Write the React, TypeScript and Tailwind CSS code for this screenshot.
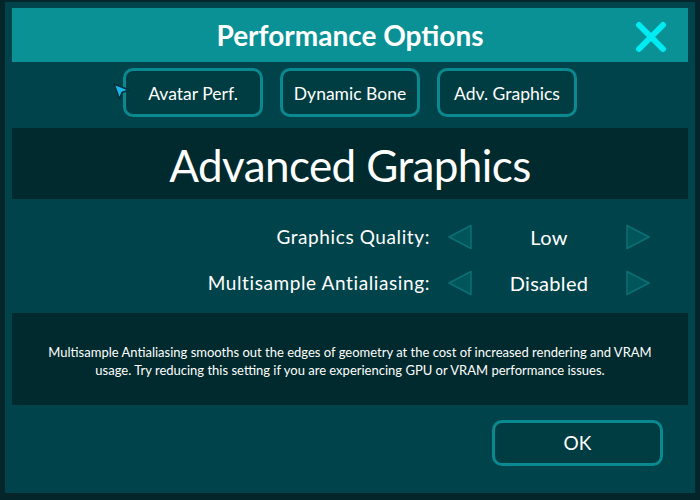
import React from 'react';

const tabs = ['Avatar Perf.', 'Dynamic Bone', 'Adv. Graphics'];

const settings = [
  { label: 'Graphics Quality:', value: 'Low' },
  { label: 'Multisample Antialiasing:', value: 'Disabled' },
];

const Arrow = ({ dir }: { dir: 'left' | 'right' }) => (
  <svg width="26" height="26" viewBox="0 0 26 26">
    <polygon
      points={dir === 'left' ? '24,1.5 24,24.5 2,13' : '2,1.5 2,24.5 24,13'}
      fill="#00555a"
      stroke="#0a7075"
      strokeWidth="1.5"
      strokeLinejoin="round"
    />
  </svg>
);

export default function App() {
  return (
    <div
      className="relative w-[700px] h-[500px] overflow-hidden bg-[#04262a] pt-[2px] pl-[5px]"
      style={{ fontFamily: 'Lato, "Noto Sans", sans-serif' }}
    >
      <div className="w-[690px] h-[491px] bg-[#00434a] px-[7px] pt-[6px] flex flex-col">
        {/* header */}
        <div className="relative h-[54px] bg-[#0a9196] flex items-center justify-center">
          <h1 className="text-[28px] font-bold text-white leading-none">Performance Options</h1>
          <button className="absolute right-[20px] top-[13px] w-[34px] h-[32px]">
            <svg width="34" height="32" viewBox="0 0 34 32">
              <path d="M5 4 L29 28 M29 4 L5 28" stroke="#00ebf2" strokeWidth="6" strokeLinecap="round" />
            </svg>
          </button>
        </div>

        {/* tabs */}
        <div className="mt-[6px] flex justify-center gap-[17px]">
          {tabs.map((t) => (
            <button
              key={t}
              className="w-[140px] h-[49px] pt-[4px] rounded-[10px] border-[3px] border-[#0a8a90] bg-[#003d42] text-white text-[17.5px]"
            >
              {t}
            </button>
          ))}
        </div>

        {/* section title */}
        <div className="mt-[11px] h-[71px] bg-[#002a2d] flex items-center justify-center">
          <h2 className="text-[44px] text-white leading-none tracking-[-0.6px] pt-[2px]">Advanced Graphics</h2>
        </div>

        {/* settings rows */}
        <div className="pt-[23px] flex flex-col gap-[18px]">
          {settings.map((s) => (
            <div key={s.label} className="h-[28px] grid grid-cols-[418px_17px_26px_152px_26px] items-center">
              <span className="text-right text-white text-[19px] tracking-[0.6px]">{s.label}</span>
              <span />
              <Arrow dir="left" />
              <span className="text-center text-white text-[20px] tracking-[0.3px]">{s.value}</span>
              <Arrow dir="right" />
            </div>
          ))}
        </div>

        {/* description */}
        <div className="mt-[17px] h-[92px] bg-[#002a2d] flex items-center justify-center px-4 pt-[4px]">
          <p className="text-center text-white text-[13px] leading-[18px]">
            Multisample Antialiasing smooths out the edges of geometry at the cost of increased rendering and VRAM
            <br />
            usage. Try reducing this setting if you are experiencing GPU or VRAM performance issues.
          </p>
        </div>

        {/* footer */}
        <div className="mt-[15px] flex justify-end pr-[25px]">
          <button className="w-[171px] h-[46px] rounded-[10px] border-[3px] border-[#0a8a90] bg-[#003d42] text-white text-[19px]">
            OK
          </button>
        </div>
      </div>

      {/* pointer cursor */}
      <svg className="absolute left-[112px] top-[82px]" width="20" height="20" viewBox="0 0 20 20">
        <polygon points="2,2 17,8 10,10.5 7.5,17" fill="#1ab6e8" stroke="#04303a" strokeWidth="1.6" strokeLinejoin="round" />
      </svg>
    </div>
  );
}
